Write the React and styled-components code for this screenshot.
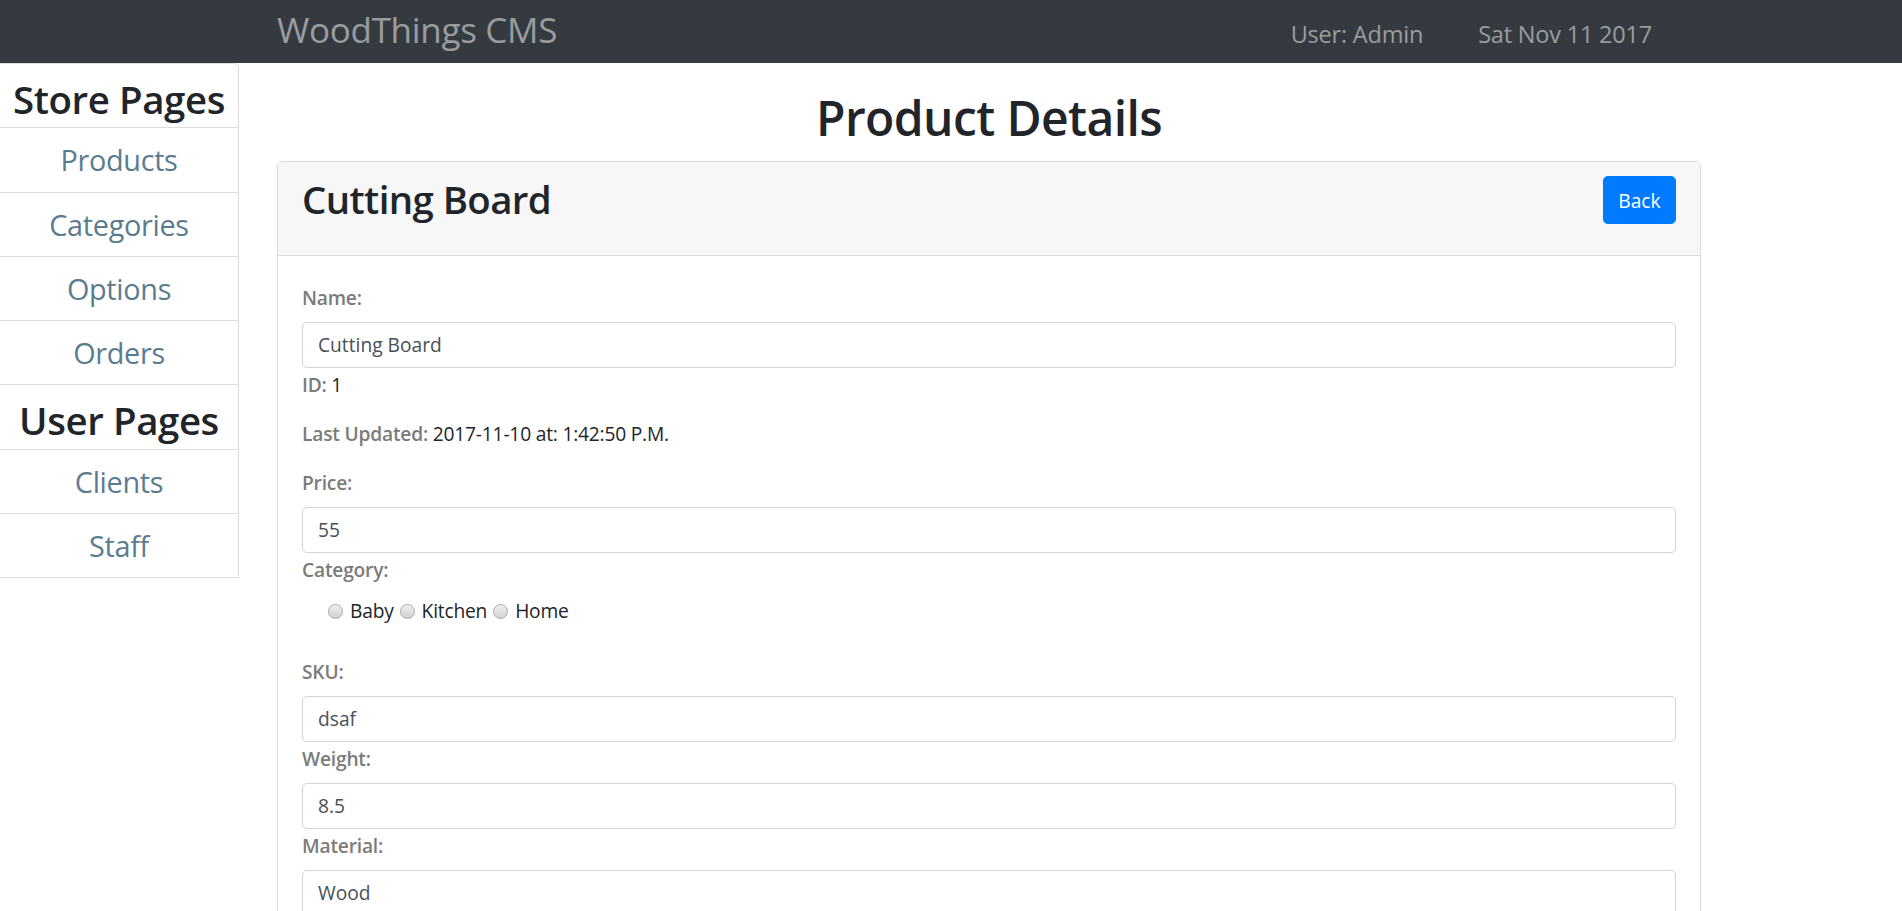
import React from "react";
import styled, { createGlobalStyle } from "styled-components";

const GlobalStyle = createGlobalStyle`
  html, body {
    margin: 0;
    padding: 0;
    background: #fff;
  }
  body {
    font-family: "Open Sans", "Noto Sans", Arial, sans-serif;
    font-size: 19.2px;
    color: #212529;
  }
  * {
    box-sizing: border-box;
  }
`;

// css
const NavBar = styled.header`
  height: 63px;
  background: #343a40;
  display: flex;
  align-items: baseline;
  padding: 4px 0 0 277px;
`;
const Brand = styled.div`
  font-size: 35px;
  line-height: 52px;
  color: rgba(255, 255, 255, 0.5);
  letter-spacing: -0.3px;
`;
const NavInfo = styled.div`
  margin-left: auto;
  margin-right: 250px;
  display: flex;
  gap: 55px;
`;
const NavText = styled.span`
  font-size: 23.5px;
  color: rgba(255, 255, 255, 0.5);
  letter-spacing: -0.2px;
`;

const Layout = styled.div`
  display: flex;
  align-items: flex-start;
`;
const SideBar = styled.nav`
  width: 239px;
  flex-shrink: 0;
  border-top: 1px solid #dcdcdc;
  border-right: 1px solid #dcdcdc;
  border-top-right-radius: 5px;
  display: flex;
  flex-direction: column;
`;
const SideHeader = styled.div`
  height: 64.3px;
  flex-shrink: 0;
  padding-top: 6px;
  border-bottom: 1px solid #dcdcdc;
  display: flex;
  align-items: center;
  justify-content: center;
  font-size: 38.4px;
  font-weight: 600;
  color: #212529;
  letter-spacing: -0.4px;
`;
const SideLink = styled.a`
  height: 64.3px;
  flex-shrink: 0;
  border-bottom: 1px solid #dcdcdc;
  display: flex;
  align-items: center;
  justify-content: center;
  font-size: 28.8px;
  color: #5a7c8f;
  text-decoration: none;
  letter-spacing: -0.3px;
  cursor: pointer;
`;

const Main = styled.main`
  width: 1424px;
  margin-left: 38px;
`;
const PageTitle = styled.h1`
  margin: 26px 0 14px;
  font-size: 48px;
  line-height: 58px;
  font-weight: 600;
  text-align: center;
  color: #212529;
  letter-spacing: -0.6px;
`;
const Card = styled.section`
  border: 1px solid #dcdcdc;
  border-radius: 5px;
  overflow: hidden;
`;
const CardHeader = styled.div`
  background: #f7f7f7;
  border-bottom: 1px solid #dcdcdc;
  padding: 14.4px 24px;
  display: flex;
  justify-content: space-between;
  align-items: flex-start;
`;
const CardTitle = styled.h2`
  margin: 0 0 18px;
  font-size: 38.4px;
  line-height: 46px;
  font-weight: 600;
  letter-spacing: -0.6px;
`;
const BackButton = styled.button`
  height: 48px;
  padding: 0 14.4px;
  border: 1px solid #007bff;
  border-radius: 4.8px;
  background: #007bff;
  color: #fff;
  font-family: inherit;
  font-size: 19.2px;
  cursor: pointer;
`;
const CardBody = styled.div`
  padding: 25px 24px 24px;
  display: flex;
  flex-direction: column;
`;
const Label = styled.label`
  display: block;
  margin: 2px 0 10px;
  line-height: 29px;
  font-weight: 600;
  color: #7b7b7b;
  letter-spacing: -0.2px;
`;
const Input = styled.input`
  height: 46px;
  width: 100%;
  padding: 0 15px;
  border: 1px solid #ced4da;
  border-radius: 4.8px;
  font-family: inherit;
  font-size: 19.2px;
  color: #495057;
  outline: none;
`;
const Info = styled.p`
  margin: 2px 0 18px;
  line-height: 29px;
  color: #212529;
  letter-spacing: -0.2px;
`;
const InfoKey = styled.span`
  font-weight: 600;
  color: #7b7b7b;
`;
const RadioRow = styled.div`
  margin: 2px 0 30px;
  padding-left: 26px;
  display: flex;
  align-items: center;
  gap: 6px;
  line-height: 29px;
`;
const RadioOption = styled.label`
  display: inline-flex;
  align-items: center;
  color: #212529;
  letter-spacing: -0.2px;
`;
const Radio = styled.input.attrs({ type: "radio" })`
  appearance: none;
  width: 15px;
  height: 15px;
  margin: 2px 7px 0 0;
  border-radius: 50%;
  border: 1px solid #a9a9a9;
  background: linear-gradient(#f0f0f0, #d2d2d2);
`;

const fields = [
  { label: "SKU:", value: "dsaf" },
  { label: "Weight:", value: "8.5" },
  { label: "Material:", value: "Wood" },
  { label: "Dimensions:", value: "12 x 18" },
];

export default function App() {
  return (
    <>
      <GlobalStyle />
      <NavBar>
        <Brand>WoodThings CMS</Brand>
        <NavInfo>
          <NavText>User: Admin</NavText>
          <NavText>Sat Nov 11 2017</NavText>
        </NavInfo>
      </NavBar>
      <Layout>
        <SideBar>
          <SideHeader>Store Pages</SideHeader>
          <SideLink>Products</SideLink>
          <SideLink>Categories</SideLink>
          <SideLink>Options</SideLink>
          <SideLink>Orders</SideLink>
          <SideHeader>User Pages</SideHeader>
          <SideLink>Clients</SideLink>
          <SideLink>Staff</SideLink>
        </SideBar>
        <Main>
          <PageTitle>Product Details</PageTitle>
          <Card>
            <CardHeader>
              <CardTitle>Cutting Board</CardTitle>
              <BackButton>Back</BackButton>
            </CardHeader>
            <CardBody>
              <Label>Name:</Label>
              <Input defaultValue="Cutting Board" />
              <Info>
                <InfoKey>ID:</InfoKey> 1
              </Info>
              <Info>
                <InfoKey>Last Updated:</InfoKey> 2017-11-10 at: 1:42:50 P.M.
              </Info>
              <Label>Price:</Label>
              <Input defaultValue="55" />
              <Label>Category:</Label>
              <RadioRow>
                {["Baby", "Kitchen", "Home"].map((c) => (
                  <RadioOption key={c}>
                    <Radio name="category" />
                    {c}
                  </RadioOption>
                ))}
              </RadioRow>
              {fields.map((f) => (
                <React.Fragment key={f.label}>
                  <Label>{f.label}</Label>
                  <Input defaultValue={f.value} />
                </React.Fragment>
              ))}
            </CardBody>
          </Card>
        </Main>
      </Layout>
    </>
  );
}
